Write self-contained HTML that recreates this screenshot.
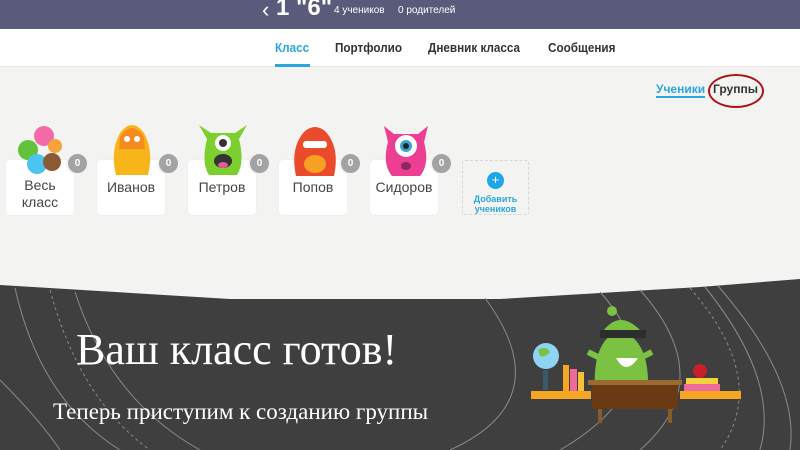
<!DOCTYPE html>
<html><head><meta charset="utf-8"><style>
*{margin:0;padding:0;box-sizing:border-box}
body{width:800px;height:450px;overflow:hidden;background:#f3f3f2;position:relative;font-family:"Liberation Sans","Noto Sans CJK SC",sans-serif}
.hdr{position:absolute;left:0;top:0;width:800px;height:29px;background:#5a5b7b;color:#fff}
.nav{position:absolute;left:0;top:29px;width:800px;height:38px;background:#fff;border-bottom:1px solid #e6e6e6}
.nav span{position:absolute;top:11px;font-size:13px;color:#333;font-weight:bold;transform:scaleX(.9);transform-origin:left}
.card{position:absolute;top:160px;width:68px;height:55px;background:#fff;border-radius:4px;text-align:center;font-size:14px;color:#444;padding-top:19px;line-height:17px;box-shadow:0 0 1px #ddd}
.badge{position:absolute;top:152px;width:23px;height:23px;border-radius:50%;background:#a3a3a3;border:2px solid #f3f3f3;color:#fff;font-size:10px;font-weight:bold;text-align:center;line-height:19px}
.mon{position:absolute}
</style></head><body>
<div class="hdr">
<span style="position:absolute;left:262px;top:-3px;font-size:22px">‹</span>
<span style="position:absolute;left:276px;top:-6px;font-size:24px;font-weight:bold">1 "6"</span>
<span style="position:absolute;left:334px;top:5px;font-size:10px">4 учеников</span>
<span style="position:absolute;left:398px;top:5px;font-size:10px">0 родителей</span>
</div>
<div class="nav">
<span style="left:275px;color:#2ba6de">Класс</span>
<span style="left:335px">Портфолио</span>
<span style="left:428px">Дневник класса</span>
<span style="left:548px">Сообщения</span>
<div style="position:absolute;left:275px;top:35px;width:35px;height:3px;background:#2ba6de"></div>
</div>
<div style="position:absolute;left:656px;top:83px;font-size:12px;font-weight:bold;color:#2ba6de;border-bottom:2px solid #2ba6de;line-height:13px">Ученики</div>
<div style="position:absolute;left:713px;top:83px;font-size:12px;font-weight:bold;color:#333;line-height:13px">Группы</div>
<div style="position:absolute;left:708px;top:74px;width:56px;height:34px;border:2px solid #b0121b;border-radius:50%"></div>

<div class="card" style="left:6px;padding-top:17px">Весь<br>класс</div>
<div class="card" style="left:97px">Иванов</div>
<div class="card" style="left:188px">Петров</div>
<div class="card" style="left:279px">Попов</div>
<div class="card" style="left:370px">Сидоров</div>

<!-- monsters -->
<svg class="mon" style="left:16px;top:124px" width="46" height="52"><circle cx="28" cy="12" r="10" fill="#f26ba8"/><circle cx="12" cy="26" r="10" fill="#63c23b"/><circle cx="39" cy="22" r="7" fill="#f5a43b"/><circle cx="21" cy="40" r="10" fill="#4dc3ef"/><circle cx="36" cy="38" r="9" fill="#8a5a35"/></svg>
<svg class="mon" style="left:108px;top:121px" width="48" height="56"><path d="M8 54 Q2 30 12 12 Q24 -4 36 12 Q46 30 40 54Z" fill="#f8b51a"/><path d="M12 16 Q24 -2 36 16 L37 28 L11 28Z" fill="#f58b1e"/><circle cx="19" cy="18" r="3" fill="#fff"/><circle cx="29" cy="18" r="3" fill="#fff"/></svg>
<svg class="mon" style="left:197px;top:123px" width="52" height="55"><path d="M2 2 L14 10 L38 10 L50 2 L42 16 Q48 40 40 52 L12 52 Q4 40 10 16Z" fill="#7ccf2c"/><circle cx="26" cy="20" r="8" fill="#fff"/><circle cx="26" cy="20" r="4" fill="#333"/><ellipse cx="26" cy="38" rx="9" ry="7" fill="#333"/><ellipse cx="26" cy="42" rx="5" ry="3" fill="#e45a9a"/></svg>
<svg class="mon" style="left:290px;top:124px" width="50" height="54"><path d="M6 52 Q0 24 14 8 Q25 -2 36 8 Q50 24 44 52Z" fill="#ea4b2c"/><rect x="13" y="17" width="24" height="7" rx="3" fill="#fff"/><ellipse cx="25" cy="40" rx="11" ry="9" fill="#f7a021"/></svg>
<svg class="mon" style="left:380px;top:122px" width="52" height="56"><path d="M4 4 L14 12 L38 12 L48 4 L44 20 Q50 42 40 54 L12 54 Q2 42 8 20Z" fill="#ec3f93"/><circle cx="26" cy="24" r="11" fill="#fff"/><circle cx="26" cy="24" r="6" fill="#3aa6cf"/><circle cx="26" cy="24" r="3" fill="#222"/><ellipse cx="26" cy="44" rx="5" ry="4" fill="#8a2a5a"/></svg>

<div class="badge" style="left:66px">0</div>
<div class="badge" style="left:157px">0</div>
<div class="badge" style="left:248px">0</div>
<div class="badge" style="left:339px">0</div>
<div class="badge" style="left:430px">0</div>
<div style="position:absolute;left:462px;top:160px;width:67px;height:55px;border:1px dashed #d6d6d6;border-radius:3px;text-align:center;font-size:9px;font-weight:bold;color:#2ba6de;line-height:10px;padding-top:33px">Добавить<br>учеников</div>
<div style="position:absolute;left:487px;top:172px;width:17px;height:17px;border-radius:50%;background:#1ea6e8;color:#fff;font-size:13px;text-align:center;line-height:16px">+</div>

<svg style="position:absolute;left:0;top:0" width="800" height="450">
<polygon points="0,285 230,299 500,299 700,287 800,279 800,450 0,450" fill="#3f3f3f"/>
<g fill="none" stroke="#8a8a8a" stroke-width="1">
<path d="M15 288 Q40 400 120 450"/>
<path d="M75 292 Q110 400 200 450"/>
<path d="M50 290 Q80 400 150 450" stroke-dasharray="3 3"/>
<path d="M0 380 Q40 420 60 450"/>
<path d="M485 298 Q560 400 450 450"/>
<path d="M600 292 Q680 380 560 450"/>
<path d="M640 290 Q720 380 640 450"/>
<path d="M690 288 Q770 380 720 450" stroke-dasharray="3 3"/>
<path d="M705 287 Q780 380 760 450"/>
<path d="M718 286 Q800 380 790 450"/>
</g>
<rect x="531" y="391" width="60" height="8" fill="#f5a623"/>
<rect x="680" y="391" width="61" height="8" fill="#f5a623"/>
<circle cx="546" cy="356" r="13" fill="#8fd3f5"/><path d="M538 350 Q546 345 550 352 Q545 358 540 356Z" fill="#7cc242"/>
<rect x="543" y="370" width="5" height="20" fill="#3a5a6a"/>
<rect x="563" y="365" width="6" height="26" fill="#f5a623"/><rect x="570" y="369" width="7" height="22" fill="#ee6a9a"/><rect x="578" y="372" width="6" height="19" fill="#f5c23b"/>
<path d="M595 390 Q592 340 620 330 Q650 340 648 390Z" fill="#7cc242"/>
<circle cx="612" cy="311" r="5" fill="#7cc242"/>
<path d="M604 330 Q620 310 640 330Z" fill="#7cc242"/>
<rect x="600" y="330" width="46" height="8" fill="#2d2d2d"/>
<path d="M588 352 L600 358 M652 352 L640 358" stroke="#7cc242" stroke-width="6"/>
<path d="M616 358 Q626 376 638 358Z" fill="#fff"/>
<rect x="588" y="380" width="94" height="5" fill="#9b6a2e"/>
<rect x="592" y="385" width="86" height="24" fill="#6a3a14"/>
<rect x="598" y="409" width="4" height="14" fill="#8a5a2a"/><rect x="668" y="409" width="4" height="14" fill="#8a5a2a"/>
<rect x="686" y="378" width="32" height="6" fill="#f5d23b"/><rect x="684" y="384" width="36" height="7" fill="#ee6a9a"/>
<circle cx="700" cy="371" r="7" fill="#c8202a"/>
</svg>
<div style="position:absolute;left:76px;top:324px;font-family:'Liberation Serif',serif;font-size:44px;color:#fff;white-space:nowrap">Ваш класс готов!</div>
<div style="position:absolute;left:53px;top:399px;font-family:'Liberation Serif',serif;font-size:23px;color:#fff;white-space:nowrap">Теперь приступим к созданию группы</div>
</body></html>
